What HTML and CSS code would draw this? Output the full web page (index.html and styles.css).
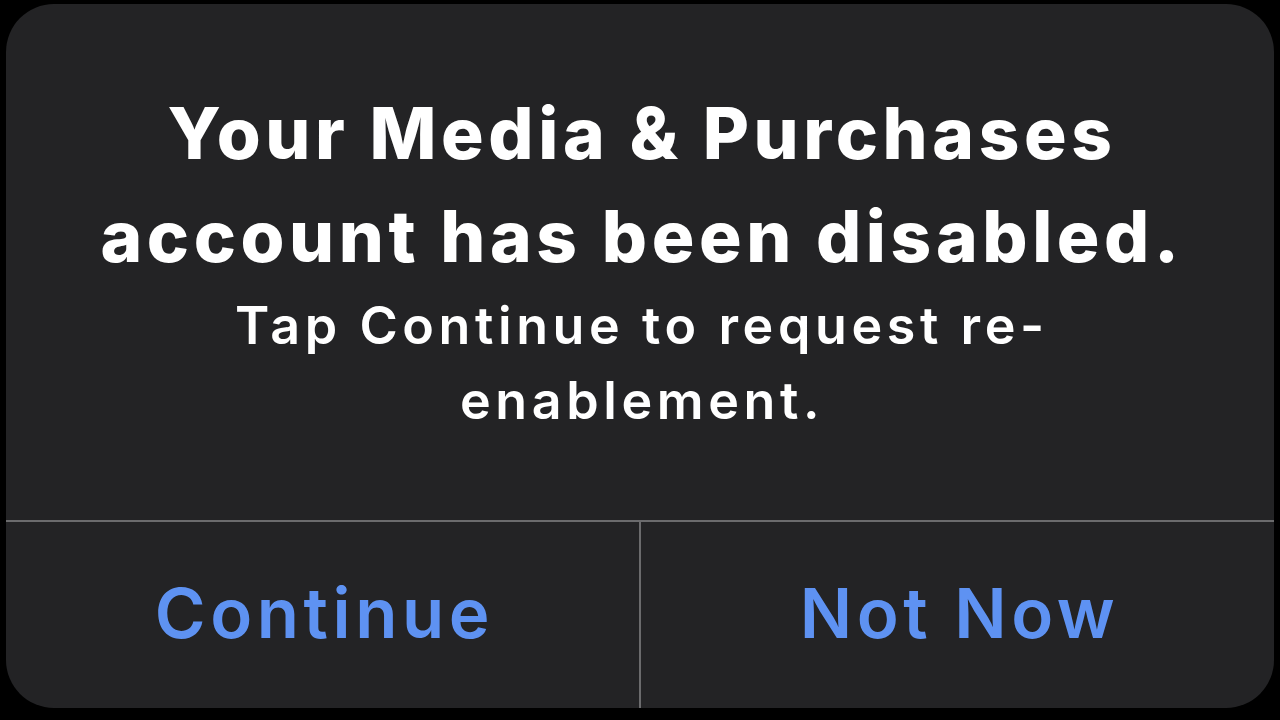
FILE: index.html
```html
<!DOCTYPE html>
<html lang="en">
<head>
<meta charset="utf-8">
<title>Alert</title>
<link rel="stylesheet" href="styles.css">
</head>
<body>
<div class="alert">
  <div class="alert-body">
    <h1 class="alert-title">Your Media &amp; Purchases<br>account has been disabled.</h1>
    <p class="alert-message">Tap Continue to request re-<br>enablement.</p>
  </div>
  <div class="alert-actions">
    <button class="alert-btn">Continue</button>
    <button class="alert-btn">Not Now</button>
  </div>
</div>
</body>
</html>
```

FILE: styles.css
```css
* { box-sizing: border-box; }
html, body {
  margin: 0;
  padding: 0;
  background: #000;
  width: 1280px;
  height: 720px;
  overflow: hidden;
}
body {
  padding: 4px 6px 0 6px;
  font-family: Inter, "Noto Sans", "Liberation Sans", sans-serif;
}
.alert {
  width: 1268px;
  height: 704px;
  background: #232325;
  border-radius: 48px;
  display: flex;
  flex-direction: column;
  overflow: hidden;
}
.alert-body {
  height: 516px;
  padding-top: 78px;
  text-align: center;
  color: #fff;
}
.alert-title {
  margin: 0;
  font-size: 71px;
  font-weight: 800;
  line-height: 103px;
  letter-spacing: 4.6px;
  padding-left: 4px;
}
.alert-message {
  margin: 0;
  font-size: 52px;
  font-weight: 600;
  line-height: 75px;
  letter-spacing: 4.6px;
  padding-left: 4px;
}
.alert-actions {
  flex: 1;
  display: grid;
  grid-template-columns: 1fr 2px 1fr;
  border-top: 2px solid #6b6b6d;
}
.alert-actions::before {
  content: "";
  grid-column: 2;
  grid-row: 1;
  background: #6b6b6d;
}
.alert-btn {
  background: none;
  border: 0;
  padding: 0 0 4px 4px;
  margin: 0;
  font-family: inherit;
  font-size: 69px;
  font-weight: 600;
  letter-spacing: 4.6px;
  color: #5e92f2;
  display: flex;
  align-items: center;
  justify-content: center;
}
.alert-btn:first-child { grid-column: 1; grid-row: 1; }
.alert-btn:last-child { grid-column: 3; grid-row: 1; }
```
